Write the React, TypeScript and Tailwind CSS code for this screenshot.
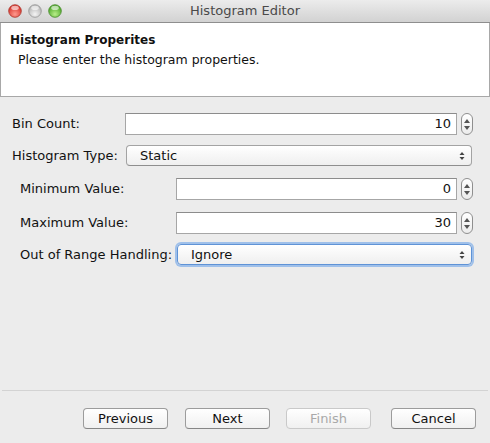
import React from 'react';

const font = { fontFamily: '"DejaVu Sans", "Liberation Sans", sans-serif' };

function Light({ from, to, edge }: { from: string; to: string; edge: string }) {
  const id = 'g' + from.replace('#', '');
  return (
    <svg width="14" height="14" viewBox="0 0 14 14">
      <defs>
        <radialGradient id={id} cx="50%" cy="75%" r="65%">
          <stop offset="0%" stopColor={to} />
          <stop offset="100%" stopColor={from} />
        </radialGradient>
      </defs>
      <circle cx="7" cy="7" r="6.3" fill={`url(#${id})`} stroke={edge} strokeWidth="0.8" />
      <ellipse cx="7" cy="3.9" rx="3.8" ry="2.1" fill="#ffffff" opacity="0.6" />
    </svg>
  );
}

function Spinner() {
  return (
    <div className="ml-[4px] w-[12px] h-[22px] rounded-[6px] border border-[#8f8f8f] bg-gradient-to-b from-white to-[#ececec] flex flex-col items-center justify-center gap-[3px]">
      <svg width="6" height="4" viewBox="0 0 6 4"><path d="M3 0 L6 4 L0 4 Z" fill="#555" /></svg>
      <svg width="6" height="4" viewBox="0 0 6 4"><path d="M0 0 L6 0 L3 4 Z" fill="#555" /></svg>
    </div>
  );
}

function NumberField({ value }: { value: string }) {
  return (
    <div className="flex items-center">
      <div className="flex-1 h-[22px] bg-white border border-[#a6a6a6] border-t-[#8c8c8c] flex items-center justify-end pr-[5px] text-[13px] text-[#111]">
        {value}
      </div>
      <Spinner />
    </div>
  );
}

function Select({ value, focused }: { value: string; focused?: boolean }) {
  return (
    <div
      className={
        'h-[21px] rounded-[4px] bg-gradient-to-b from-white to-[#efefef] flex items-center pl-[13px] pr-[6px] text-[13px] text-[#111] ' +
        (focused
          ? 'border border-[#5f93d6] shadow-[0_0_0_2px_#9fc0ea]'
          : 'border border-[#a3a3a3] border-b-[#8e8e8e]')
      }
    >
      <span className="flex-1">{value}</span>
      <svg width="6" height="10" viewBox="0 0 6 10">
        <path d="M3 1 L5.5 4 L0.5 4 Z" fill="#444" />
        <path d="M0.5 6 L5.5 6 L3 9 Z" fill="#444" />
      </svg>
    </div>
  );
}

function Button({ label, disabled }: { label: string; disabled?: boolean }) {
  return (
    <div
      className={
        'w-[85px] h-[21px] rounded-[4px] flex items-center justify-center text-[13px] bg-gradient-to-b from-white to-[#f0f0f0] ' +
        (disabled ? 'border border-[#c9c9c9] text-[#a9a9a9]' : 'border border-[#9c9c9c] border-b-[#868686] text-[#111]')
      }
    >
      {label}
    </div>
  );
}

export default function App() {
  return (
    <div className="w-[490px] h-[443px] bg-[#ececec] flex flex-col overflow-hidden" style={font}>
      {/* title bar */}
      <div className="h-[23px] shrink-0 bg-gradient-to-b from-[#ececec] to-[#d2d2d2] border-b border-[#8e8e8e] flex items-center relative">
        <div className="flex items-center gap-[6px] pl-[8px]">
          <Light from="#d8352c" to="#ff9a8e" edge="#a8322a" />
          <Light from="#b5b5b5" to="#f4f4f4" edge="#969696" />
          <Light from="#4ea82a" to="#b8ee88" edge="#45882a" />
        </div>
        <div className="absolute inset-0 flex items-center justify-center text-[13px] text-[#4a4a4a]">Histogram Editor</div>
      </div>

      {/* header */}
      <div className="h-[74px] shrink-0 bg-white border-x border-b border-[#a8a8a8] pt-[9px] pl-[9px]">
        <div className="text-[12px] font-bold text-[#111] leading-[17px]">Histogram Properites</div>
        <div className="text-[12.5px] text-[#111] leading-[17px] mt-[2px] pl-[8px]">Please enter the histogram properties.</div>
      </div>

      {/* form */}
      <div className="flex flex-col pl-[12px] pr-[16px] text-[13px] text-[#111]">
        <div className="flex items-center mt-[16px]">
          <div className="w-[113px]">Bin Count:</div>
          <div className="flex-1 pr-[1px]"><NumberField value="10" /></div>
        </div>
        <div className="flex items-center mt-[10px]">
          <div className="w-[114px]">Histogram Type:</div>
          <div className="flex-1 pr-[2px]"><Select value="Static" /></div>
        </div>
        <div className="flex items-center mt-[12px] pl-[8px]">
          <div className="w-[156px]">Minimum Value:</div>
          <div className="flex-1 pr-[1px]"><NumberField value="0" /></div>
        </div>
        <div className="flex items-center mt-[12px] pl-[8px]">
          <div className="w-[156px]">Maximum Value:</div>
          <div className="flex-1 pr-[1px]"><NumberField value="30" /></div>
        </div>
        <div className="flex items-center mt-[10px] pl-[8px]">
          <div className="w-[157px]">Out of Range Handling:</div>
          <div className="flex-1 pr-[2px]"><Select value="Ignore" focused /></div>
        </div>
      </div>

      <div className="flex-1" />

      {/* footer */}
      <div className="border-t border-[#d3d3d3] mx-[2px]" />
      <div className="h-[52px] flex items-start justify-end pt-[17px] pr-[14px]">
        <Button label="Previous" />
        <div className="ml-[17px]"><Button label="Next" /></div>
        <div className="ml-[16px]"><Button label="Finish" disabled /></div>
        <div className="ml-[20px]"><Button label="Cancel" /></div>
      </div>
    </div>
  );
}
